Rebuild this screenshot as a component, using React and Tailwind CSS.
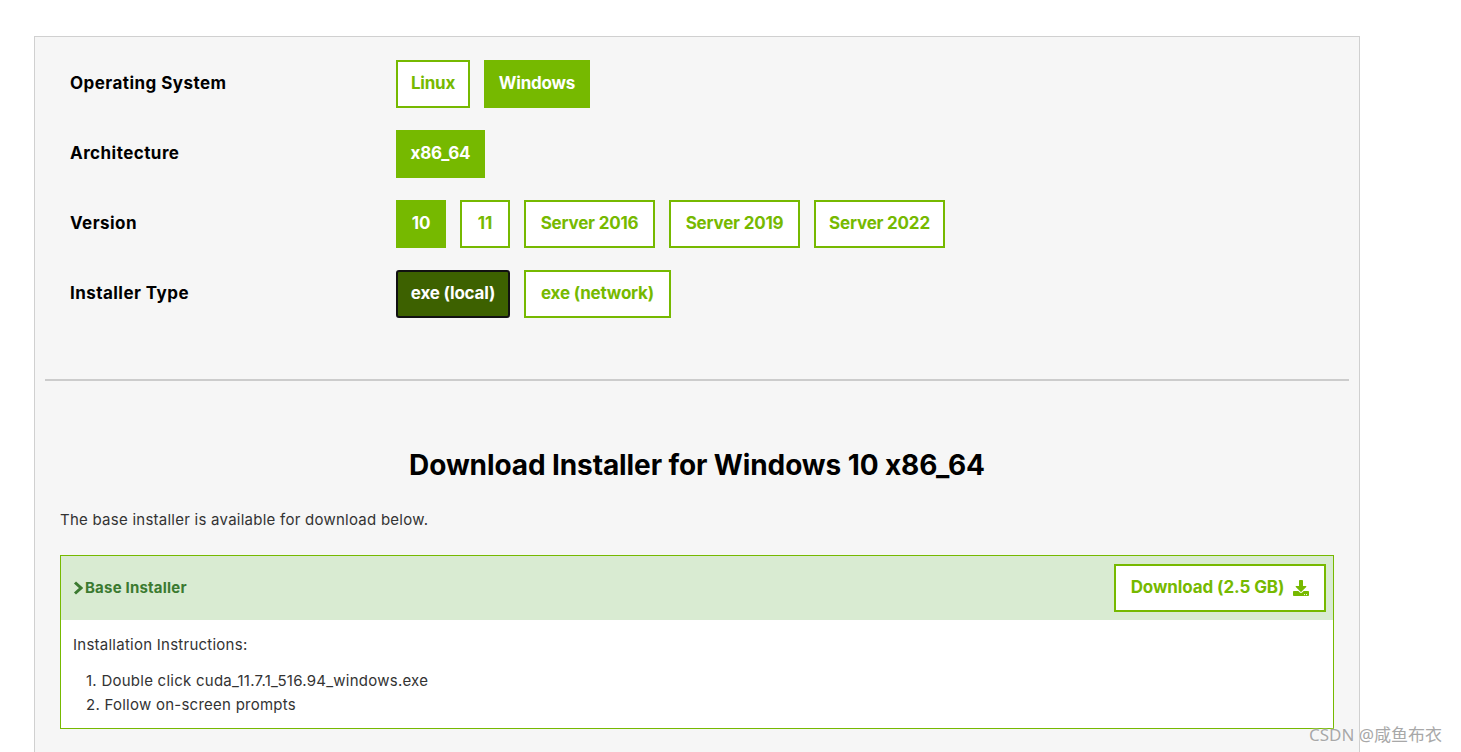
import React from 'react';
import { FaDownload } from 'react-icons/fa';

const rows = [
  {
    label: 'Operating System',
    options: [
      { text: 'Linux', w: 'w-[74px]' },
      { text: 'Windows', w: 'w-[106px]', active: true },
    ],
  },
  {
    label: 'Architecture',
    options: [{ text: 'x86_64', w: 'w-[89px]', active: true }],
  },
  {
    label: 'Version',
    options: [
      { text: '10', w: 'w-[50px]', active: true },
      { text: '11', w: 'w-[50px]' },
      { text: 'Server 2016', w: 'w-[131px]' },
      { text: 'Server 2019', w: 'w-[131px]' },
      { text: 'Server 2022', w: 'w-[131px]' },
    ],
  },
  {
    label: 'Installer Type',
    options: [
      { text: 'exe (local)', w: 'w-[114px]', selected: true },
      { text: 'exe (network)', w: 'w-[147px]' },
    ],
  },
];

const OptionButton = ({ opt }) => {
  let cls = 'bg-white border-[#76b900] text-[#76b900]';
  if (opt.active) cls = 'bg-[#76b900] border-[#76b900] text-white';
  if (opt.selected) cls = 'bg-[#3d6100] border-[#111] text-white rounded-[3px]';
  return (
    <button
      className={`${opt.w} ${cls} h-12 border-2 flex items-center justify-center text-[17px] font-bold tracking-[-0.2px]`}
    >
      {opt.text}
    </button>
  );
};

export default function App() {
  return (
    <div className="min-h-[752px] bg-white pt-9 pl-[34px] pr-[101px] font-['Inter',sans-serif] relative overflow-hidden">
      <div className="border border-[#d0d0d0] border-b-0 bg-[#f6f6f6] min-h-[740px]">
        <div className="pt-[23px] pl-[35px] flex flex-col gap-[22px]">
          {rows.map((row) => (
            <div key={row.label} className="flex items-center">
              <div className="w-[326px] text-[17px] font-bold text-black tracking-[0.45px]">{row.label}</div>
              <div className="flex gap-[14px]">
                {row.options.map((opt) => (
                  <OptionButton key={opt.text} opt={opt} />
                ))}
              </div>
            </div>
          ))}
        </div>

        <div className="mx-[10px] mt-[61px] h-[2px] bg-[#cccccc]" />

        <h2 className="text-center text-[28px] font-bold text-black mt-[68px] leading-8 tracking-[-0.1px]">
          Download Installer for Windows 10 x86_64
        </h2>

        <p className="mt-[29px] ml-[25px] text-[15px] text-[#333] leading-5 tracking-[0.25px]">
          The base installer is available for download below.
        </p>

        <div className="mx-[25px] mt-[25px] border border-[#76b900] bg-white">
          <div className="bg-[#d9ebd2] h-16 flex items-center justify-between pl-3 pr-[7px]">
            <div className="flex items-center gap-[2px] text-[#3b7a30] text-[15px] font-bold tracking-[0.2px]">
              <svg width="10" height="14" viewBox="0 0 10 14" className="shrink-0">
                <polyline points="2,1.5 8,7 2,12.5" fill="none" stroke="#3b7a30" strokeWidth="3" />
              </svg>
              <span>Base Installer</span>
            </div>
            <button className="w-[212px] h-12 bg-white border-2 border-[#76b900] text-[#76b900] text-[17px] font-bold tracking-[-0.1px] flex items-center justify-center gap-[9px]">
              <span>Download (2.5 GB)</span>
              <FaDownload className="w-4 h-4" />
            </button>
          </div>
          <div className="px-3 pt-[15px] pb-[11px] text-[15px] text-[#333] tracking-[0.25px]">
            <p className="leading-5">Installation Instructions:</p>
            <ol className="mt-[14px] pl-[13px] leading-6">
              <li>1. Double click cuda_11.7.1_516.94_windows.exe</li>
              <li>2. Follow on-screen prompts</li>
            </ol>
          </div>
        </div>
      </div>

      <div className="absolute left-[1309px] top-[722px] text-[17px] text-[#a8a8a8] font-['Noto_Sans','Noto_Sans_CJK_SC',sans-serif] [text-shadow:0_0_2px_#fff]">
        CSDN @咸鱼布衣
      </div>
    </div>
  );
}
